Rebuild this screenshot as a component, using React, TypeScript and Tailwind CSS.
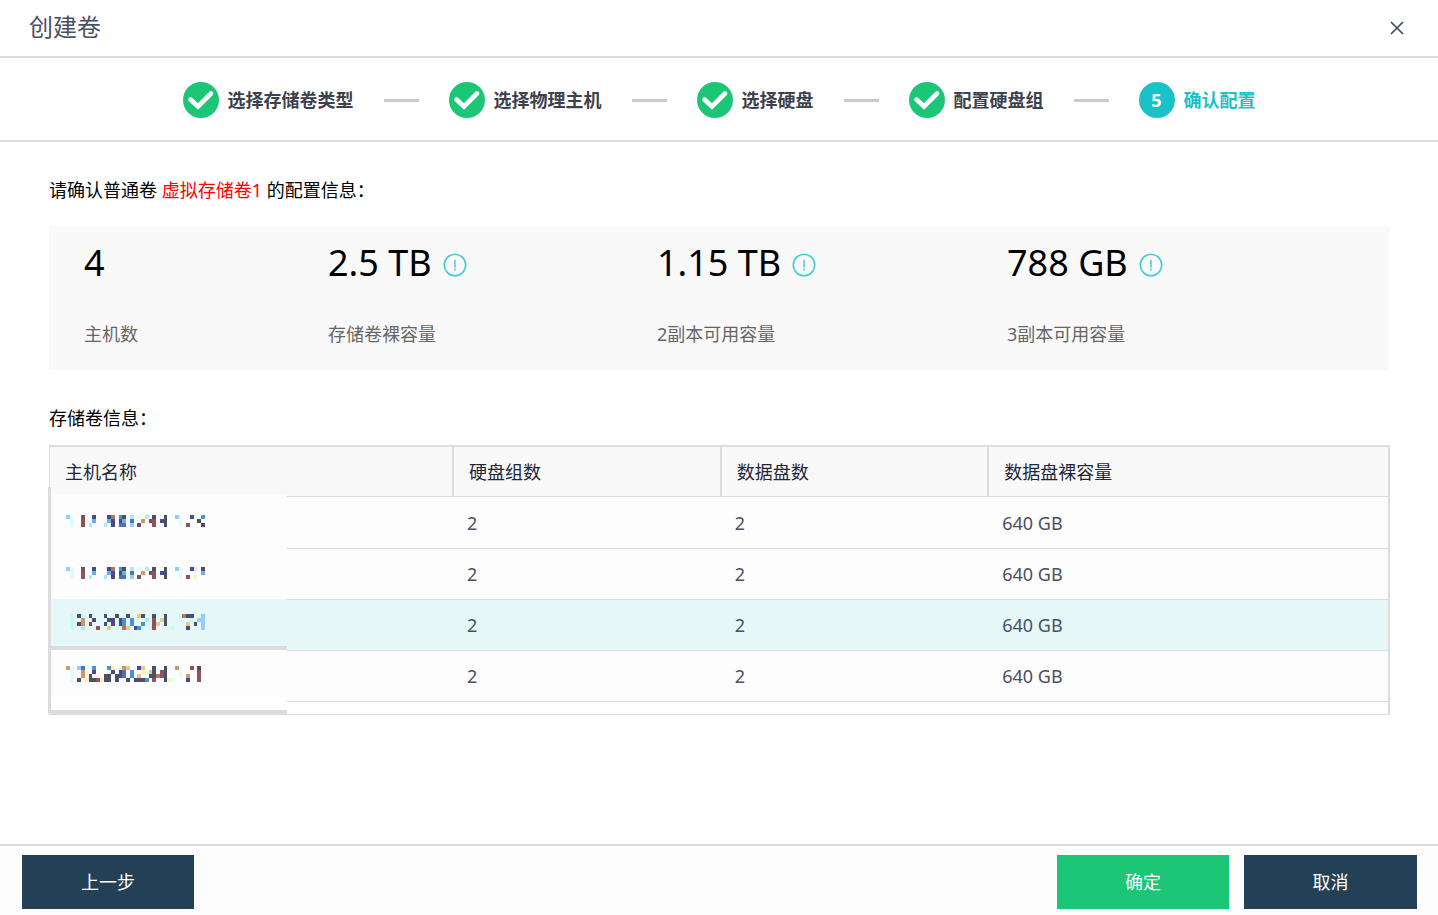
import React from "react";

const palette: Record<string, string> = {
  a: "#93cdfc",
  b: "#dffdfd",
  c: "#e6c890",
  g: "#e4f6dc",
  i: "#454c95",
  k: "#4a5064",
  l: "#aee8fe",
  m: "#755060",
  n: "#4b4a78",
  o: "#cf9860",
  p: "#fde0e0",
  r: "#95505f",
  s: "#4795cf",
  t: "#b07860",
  u: "#6cb0e8",
  x: "#cdf8f8",
  y: "#fdf0b8",
  B: "#4a76b5",
};

const mosaics: string[][] = [
  [
    "0a 1b 4m 7n 11n 12t 14s 15k 17l 19b 21l 23k 26k 29a 30b 33i 36s",
    "1b 4r 7u 11u 12i 14k 15u 17B 20o 22m 23r 25i 26k 30b 35k",
    "1b 4r 6l 10l 12k 14B 15B 17a 19m 23r 26k 30b 32r 36n",
  ],
  [
    "0a 1b 4m 7n 11n 12t 14s 15k 17l 19b 21l 23k 26k 29a 30b 33i 34p 36n",
    "1b 4r 7u 11u 12i 14k 15u 17B 20o 22m 23r 25i 26k 30b 36u",
    "1b 4r 6l 10l 12k 14B 15B 17a 19m 23r 26k 30b 32r 34y",
  ],
  [
    "1x 3k 4x 6k 10k 13k 16k 19c 20k 23k 26k 30x 31t 32k 33k 35g 36a",
    "1x 4o 7n 11n 12n 14n 15s 17s 21l 22g 23r 25c 26k 30x 33x 35a 36a",
    "1x 3k 4o 6m 10k 12n 14n 15s 17s 20s 22x 23r 24c 26k 32c 34k 36a",
    "1x 4l 5g 8r 9g 11c 15t 16c 18i 19s 22x 23r 27g 28x 32n 36a",
  ],
  [
    "0o 1b 3a 4B 7s 11s 12y 14b 15o 16c 19i 20c 23k 26k 29o 30b 33r 35k",
    "1b 4o 7i 12n 14k 15B 17s 20y 21b 22c 23k 25r 26k 30b 35r",
    "1b 4o 6k 10k 11k 13n 14i 15B 17s 19c 22k 23k 24t 25r 26k 30b 32o 35r",
    "1b 3k 5y 6k 7k 8r 9y 10k 11k 13k 16k 18i 19k 20k 21s 23r 26k 27y 28b 32i 35r",
  ],
];

function Mosaic({ rows }: { rows: string[] }) {
  return (
    <svg
      width="139"
      height={rows.length * 4}
      viewBox={`0 0 37 ${rows.length}`}
      preserveAspectRatio="none"
      shapeRendering="crispEdges"
      aria-hidden="true"
    >
      {rows.map((row, y) =>
        row.split(" ").map((cell) => (
          <rect
            key={`${y}-${cell}`}
            x={parseInt(cell, 10)}
            y={y}
            width="1"
            height="1"
            fill={palette[cell.slice(-1)]}
          />
        ))
      )}
    </svg>
  );
}

function CheckBadge() {
  return (
    <svg width="36" height="36" viewBox="0 0 36 36" aria-hidden="true">
      <circle cx="18" cy="18" r="18" fill="#1cc677" />
      <path
        d="M7.5 17.5 L15 24.5 L28 11.5"
        fill="none"
        stroke="#fff"
        strokeWidth="4.6"
        strokeLinecap="round"
        strokeLinejoin="miter"
      />
    </svg>
  );
}

function InfoIcon() {
  return (
    <svg width="24" height="24" viewBox="0 0 24 24" aria-hidden="true">
      <circle cx="12" cy="12" r="10.7" fill="none" stroke="#45cdd2" strokeWidth="1.6" />
      <path d="M12 6.8 V14.4" stroke="#45cdd2" strokeWidth="1.5" />
      <path d="M12 15.5 V17.4" stroke="#45cdd2" strokeWidth="1.5" />
    </svg>
  );
}

const steps = ["选择存储卷类型", "选择物理主机", "选择硬盘", "配置硬盘组", "确认配置"];

const stats = [
  { value: "4", label: "主机数", info: false },
  { value: "2.5 TB", label: "存储卷裸容量", info: true },
  { value: "1.15 TB", label: "2副本可用容量", info: true },
  { value: "788 GB", label: "3副本可用容量", info: true },
];

const headings = ["主机名称", "硬盘组数", "数据盘数", "数据盘裸容量"];

const hosts = [
  { groups: 2, disks: 2, capacity: "640 GB", active: false },
  { groups: 2, disks: 2, capacity: "640 GB", active: false },
  { groups: 2, disks: 2, capacity: "640 GB", active: true },
  { groups: 2, disks: 2, capacity: "640 GB", active: false },
];

export default function App() {
  return (
    <div className="flex min-h-screen flex-col bg-white font-['Noto_Sans','Noto_Sans_CJK_SC',sans-serif] text-[18px] leading-6 text-black">
      <header className="flex h-[58px] items-center justify-between border-b-2 border-[#dcdcdc] pr-[33px] pl-[29px]">
        <h1 className="pb-0.5 text-2xl text-[#4a5064]">创建卷</h1>
        <button type="button" aria-label="关闭" className="p-0">
          <svg width="16" height="16" viewBox="0 0 16 16" aria-hidden="true">
            <path d="M2 2 L14 14 M14 2 L2 14" stroke="#3f4d63" strokeWidth="1.7" />
          </svg>
        </button>
      </header>

      <nav className="border-b-2 border-[#dcdcdc]">
        <ol className="flex h-[82px] items-center justify-center pt-0.5 font-bold text-[#3c414d]">
          {steps.map((step, index) => {
            const current = index === steps.length - 1;
            return (
              <li key={step} className="flex items-center" aria-current={current ? "step" : undefined}>
                {current ? (
                  <span className="flex size-9 items-center justify-center rounded-full bg-[#1ac1c8] text-white">
                    {index + 1}
                  </span>
                ) : (
                  <CheckBadge />
                )}
                <span className={current ? "pl-[9px] text-[#1ac1c8]" : "pl-[9px]"}>{step}</span>
                {!current && <span className="mx-[30px] h-[3px] w-[35px] bg-[#c8c9c9]" />}
              </li>
            );
          })}
        </ol>
      </nav>

      <main className="flex-1 pt-9 pr-12 pl-[49px]">
        <p>
          请确认普通卷 <span className="text-[#f00]">虚拟存储卷1</span> 的配置信息：
        </p>

        <dl className="mt-6 grid h-36 grid-cols-[244fr_329fr_350fr_383fr] bg-[#f9f9f9] pt-3 pl-[35px]">
          {stats.map((stat) => (
            <div key={stat.label} className="flex flex-col-reverse justify-end gap-[34px]">
              <dt className="text-[#666]">{stat.label}</dt>
              <dd className="flex items-center gap-[11px] text-4xl leading-[50px]">
                {stat.value}
                {stat.info && (
                  <button type="button" aria-label={`${stat.label}说明`} className="mt-1">
                    <InfoIcon />
                  </button>
                )}
              </dd>
            </div>
          ))}
        </dl>

        <h2 className="mt-9 mb-[15px]">存储卷信息：</h2>

        <div className="relative border-t-2 border-r-2 border-b border-l border-[#dcdcdc] pb-3">
          <table className="w-full table-fixed border-separate border-spacing-0 text-left">
            <colgroup>
              <col className="w-[30.2%]" />
              <col className="w-[20%]" />
              <col className="w-[20%]" />
              <col />
            </colgroup>
            <thead>
              <tr className="h-[50px] bg-[#f9f9f9] text-[#1f2638]">
                {headings.map((heading) => (
                  <th
                    key={heading}
                    scope="col"
                    className="border-r-2 border-b border-[#dcdcdc] py-0 pl-[15px] font-normal last:border-r-0"
                  >
                    {heading}
                  </th>
                ))}
              </tr>
            </thead>
            <tbody className="text-[#4a5064]">
              {hosts.map((host, index) => (
                <tr
                  key={index}
                  className={
                    host.active ? "h-[51px] bg-[#e5f7f7]" : "h-[51px] bg-[#fdfdfd] first:h-[52px]"
                  }
                >
                  <td className="border-b border-[#dcdcdc]" />
                  <td className="border-b border-[#dcdcdc] pl-[13px]">{host.groups}</td>
                  <td className="border-b border-[#dcdcdc] pl-[13px]">{host.disks}</td>
                  <td className="border-b border-[#dcdcdc] pl-[13px]">{host.capacity}</td>
                </tr>
              ))}
            </tbody>
          </table>

          {/* Masked host names, laid over the first column */}
          <div className="absolute bottom-0 -left-0.5 w-[239px] border-l-[3px] border-[#dcdcdc] pt-2">
            <div className="h-[104px] bg-[#fdfdfd] pt-5 pl-[15px]">
              <Mosaic rows={mosaics[0]} />
              <div className="pt-10">
                <Mosaic rows={mosaics[1]} />
              </div>
            </div>
            <div className="h-[51px] border-b-4 border-[#dcdcdc] bg-[#e5f7f7] pt-[15px] pl-[15px]">
              <Mosaic rows={mosaics[2]} />
            </div>
            <div className="h-[47px] bg-[#fdfdfd] pt-4 pl-[15px]">
              <Mosaic rows={mosaics[3]} />
            </div>
            <div className="h-[17px] border-b-4 border-[#dcdcdc] bg-white" />
          </div>
        </div>
      </main>

      <footer className="flex gap-[15px] border-t-2 border-[#dcdcdc] bg-[#fdfdfd] pt-[9px] pr-[21px] pb-1.5 pl-[22px] text-white">
        <button type="button" className="mr-auto h-[54px] w-[172px] bg-[#234056]">
          上一步
        </button>
        <button type="button" className="h-[54px] w-[172px] bg-[#1cc677]">
          确定
        </button>
        <button type="button" className="h-[54px] w-[173px] bg-[#234056]">
          取消
        </button>
      </footer>
    </div>
  );
}
